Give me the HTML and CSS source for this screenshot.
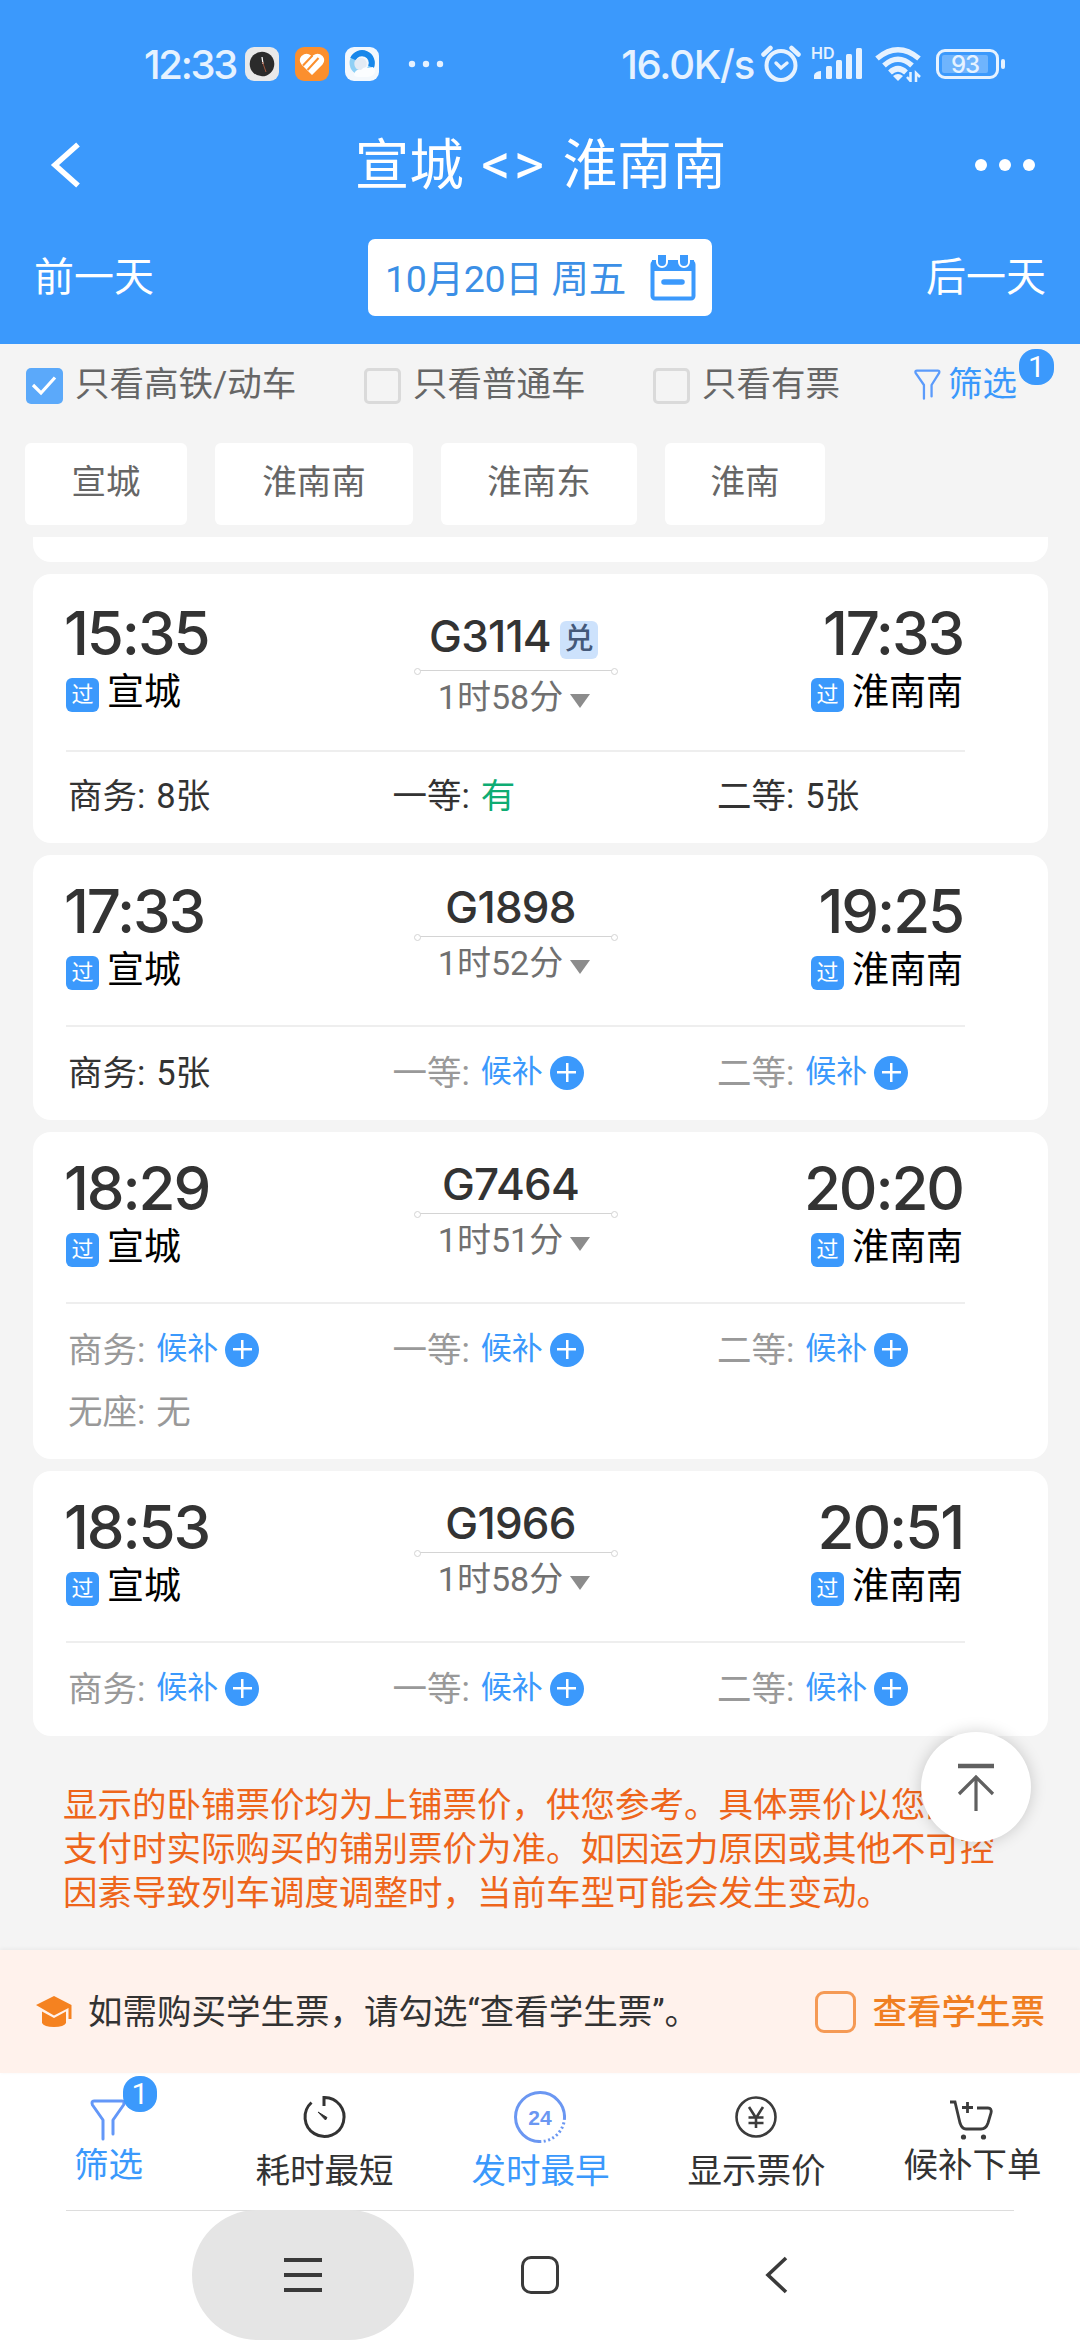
FILE: index.html
```html
<!DOCTYPE html>
<html lang="zh-CN">
<head>
    <meta charset="UTF-8">
    <meta name="viewport" content="width=device-width, initial-scale=1.0">
    <title>宣城 - 淮南南</title>
    <link rel="stylesheet" href="styles.css">
</head>
<body>
    <header class="header">
        <div class="status-bar">
            <span class="clock">12:33</span>
            <div class="app-icons">
                <svg width="34" height="34" viewBox="0 0 34 34">
                    <rect width="34" height="34" rx="9" fill="#e9e9e9"/>
                    <circle cx="17" cy="17" r="12.3" fill="#2b2b2b"/>
                    <path d="M18 17l-1-7" stroke="#fff" stroke-width="1.3"/>
                    <path d="M17.500 15l3.500 10" stroke="#a0553c" stroke-width="1"/>
                </svg>
                <svg width="34" height="34" viewBox="0 0 34 34">
                    <rect width="34" height="34" rx="9" fill="#fb8f2e"/>
                    <path d="M17 28L6.500 17.500Q3 13 6.500 9q5-4 9.500-.5L17 9.500l1-1q5-3.500 9.500.5 3.500 4 0 8.500z" fill="#fff"/>
                    <path d="M8 18.500L17.500 8.500M12.500 23L23.500 11" stroke="#fb8f2e" stroke-width="2"/>
                </svg>
                <svg width="34" height="34" viewBox="0 0 34 34">
                    <rect width="34" height="34" rx="9" fill="#f3f8fd"/>
                    <circle cx="17" cy="16" r="9.700" stroke="#8fd0f5" stroke-width="5.500" fill="none"/>
                    <path d="M8 12A9.700 9.700 0 0 1 26 20" stroke="#1787ea" stroke-width="6" fill="none"/>
                    <circle cx="15.500" cy="17" r="6.200" fill="#e3ebf4"/>
                    <path d="M9 28q1-6 7-5 3-4 7-2l5-1q4 4 0 8-2 2-6 2h-9q-3 0-4-2z" fill="#fbfdff"/>
                </svg>
            </div>
            <svg class="status-dots" width="36" height="8" viewBox="0 0 36 8" fill="#e6f2ff">
                <circle cx="4" cy="4" r="3.200"/><circle cx="18" cy="4" r="3.200"/><circle cx="32" cy="4" r="3.200"/>
            </svg>
            <span class="net-speed">16.0K/s</span>
            <svg class="alarm" width="40" height="38" viewBox="0 0 40 38" fill="none" stroke="#e6f2ff">
                <circle cx="20" cy="20.500" r="14.500" stroke-width="4"/>
                <path d="M2.500 9.500l7-6.500M37.500 9.500l-7-6.500" stroke-width="4.500" stroke-linecap="round"/>
                <path d="M15 18l5 5 6-5" stroke-width="3.400" stroke-linecap="round"/>
            </svg>
            <div class="signal">
                <span class="hd">HD</span>
                <svg width="50" height="32" viewBox="0 0 50 32" fill="#e6f2ff">
                    <path d="M0 31v-4q2-4 7-4v8z"/>
                    <rect x="12" y="18" width="6" height="13" rx="1.500"/>
                    <rect x="22" y="12" width="6" height="19" rx="1.500"/>
                    <rect x="32" y="6" width="6" height="25" rx="1.500"/>
                    <rect x="42" y="0" width="6" height="31" rx="1.500"/>
                </svg>
            </div>
            <svg class="wifi" width="48" height="36" viewBox="0 0 48 36" fill="none" stroke="#e6f2ff" stroke-width="5.500">
                <path d="M2 12.500Q23-5 44 12.500"/>
                <path d="M9 19.500Q23 7 37 19.500"/>
                <path d="M15 26.500Q23 19 31 26.500"/>
                <path d="M18 30q5-4 10 0l-5 5z" fill="#e6f2ff" stroke="none"/>
                <path d="M35.500 26v9l-3.500-4M41 36v-9l4 4" stroke-width="2.500"/>
            </svg>
            <div class="battery"><span>93</span></div>
        </div>

        <div class="title-bar">
            <svg class="back" width="32" height="46" viewBox="0 0 32 46" fill="none" stroke="#fff" stroke-width="5.500">
                <path d="M28 2.500L5 23l23 20.500"/>
            </svg>
            <h1>宣城 <span class="swap">&lt;&gt;</span> 淮南南</h1>
            <svg class="more" width="62" height="14" viewBox="0 0 62 14" fill="#fff">
                <circle cx="7" cy="7" r="6"/><circle cx="31" cy="7" r="6"/><circle cx="55" cy="7" r="6"/>
            </svg>
        </div>

        <div class="date-bar">
            <span>前一天</span>
            <div class="date-box">
                <span>10月20日 周五</span>
                <svg width="46" height="46" viewBox="0 0 46 46" fill="none" stroke="#3b99fc">
                    <rect x="2.500" y="7" width="41" height="36.500" rx="2.500" stroke-width="4"/>
                    <path d="M2 5h42v11H2z" fill="#3b99fc" stroke="none"/>
                    <path d="M7 0v7a5 5 0 0 0 10 0V0M29 0v7a5 5 0 0 0 10 0V0" fill="#3b99fc" stroke="#fff" stroke-width="2"/>
                    <path d="M14 27h18" stroke-width="5.500" stroke-linecap="round"/>
                </svg>
            </div>
            <span>后一天</span>
        </div>
    </header>

    <div class="filters">
        <label class="filter f-gd"><i class="box checked"><svg width="36" height="34" viewBox="0 0 36 34" fill="none" stroke="#fff" stroke-width="3.200"><path d="M7 17l8 8L29 9.500"/></svg></i>只看高铁/动车</label>
        <label class="filter f-pt"><i class="box"></i>只看普通车</label>
        <label class="filter f-yp"><i class="box"></i>只看有票</label>
        <div class="filter-more">
            <svg width="28" height="32" viewBox="0 0 36 42" fill="none" stroke="#5b9bfb" stroke-width="3" stroke-linecap="round" stroke-linejoin="round">
                <path d="M14 39V21L3 5Q2 2 5 2h27q3 0 2 3L24 21v15"/>
            </svg>
            筛选
            <span class="badge">1</span>
        </div>
    </div>

    <div class="stations">
        <span class="chip w1">宣城</span>
        <span class="chip w2">淮南南</span>
        <span class="chip w3">淮南东</span>
        <span class="chip w4">淮南</span>
    </div>

    <main class="list">
        <div class="card stub"></div>

        <div class="card has-tag">
            <div class="trip">
                <div class="from">
                    <div class="time">15:35</div>
                    <div class="station"><i class="pass">过</i>宣城</div>
                </div>
                <div class="middle">
                    <div class="number">G3114<i class="tag">兑</i></div>
                    <div class="line"></div>
                    <div class="duration">1时58分<i class="caret"></i></div>
                </div>
                <div class="to">
                    <div class="time">17:33</div>
                    <div class="station"><i class="pass">过</i>淮南南</div>
                </div>
            </div>
            <div class="seats">
                <div class="seat">商务:<span>8张</span></div>
                <div class="seat">一等:<span class="have">有</span></div>
                <div class="seat">二等:<span>5张</span></div>
            </div>
        </div>

        <div class="card">
            <div class="trip">
                <div class="from">
                    <div class="time">17:33</div>
                    <div class="station"><i class="pass">过</i>宣城</div>
                </div>
                <div class="middle">
                    <div class="number">G1898</div>
                    <div class="line"></div>
                    <div class="duration">1时52分<i class="caret"></i></div>
                </div>
                <div class="to">
                    <div class="time">19:25</div>
                    <div class="station"><i class="pass">过</i>淮南南</div>
                </div>
            </div>
            <div class="seats">
                <div class="seat">商务:<span>5张</span></div>
                <div class="seat none">一等:<span class="wait">候补</span><i class="plus"></i></div>
                <div class="seat none">二等:<span class="wait">候补</span><i class="plus"></i></div>
            </div>
        </div>

        <div class="card">
            <div class="trip">
                <div class="from">
                    <div class="time">18:29</div>
                    <div class="station"><i class="pass">过</i>宣城</div>
                </div>
                <div class="middle">
                    <div class="number">G7464</div>
                    <div class="line"></div>
                    <div class="duration">1时51分<i class="caret"></i></div>
                </div>
                <div class="to">
                    <div class="time">20:20</div>
                    <div class="station"><i class="pass">过</i>淮南南</div>
                </div>
            </div>
            <div class="seats">
                <div class="seat none">商务:<span class="wait">候补</span><i class="plus"></i></div>
                <div class="seat none">一等:<span class="wait">候补</span><i class="plus"></i></div>
                <div class="seat none">二等:<span class="wait">候补</span><i class="plus"></i></div>
                <div class="seat none">无座:<span>无</span></div>
            </div>
        </div>

        <div class="card">
            <div class="trip">
                <div class="from">
                    <div class="time">18:53</div>
                    <div class="station"><i class="pass">过</i>宣城</div>
                </div>
                <div class="middle">
                    <div class="number">G1966</div>
                    <div class="line"></div>
                    <div class="duration">1时58分<i class="caret"></i></div>
                </div>
                <div class="to">
                    <div class="time">20:51</div>
                    <div class="station"><i class="pass">过</i>淮南南</div>
                </div>
            </div>
            <div class="seats">
                <div class="seat none">商务:<span class="wait">候补</span><i class="plus"></i></div>
                <div class="seat none">一等:<span class="wait">候补</span><i class="plus"></i></div>
                <div class="seat none">二等:<span class="wait">候补</span><i class="plus"></i></div>
            </div>
        </div>

        <p class="notice">显示的卧铺票价均为上铺票价，供您参考。具体票价以您的<br>支付时实际购买的铺别票价为准。如因运力原因或其他不可控<br>因素导致列车调度调整时，当前车型可能会发生变动。</p>

        <!-- Back to top -->
        <div class="to-top">
            <svg width="40" height="48" viewBox="0 0 40 48" fill="none" stroke="#606060">
                <path d="M2 3h36" stroke-width="4.500"/>
                <path d="M20 48V15M3 31l17-17 17 17" stroke-width="3.200"/>
            </svg>
        </div>
    </main>

    <div class="student">
        <svg width="38" height="32" viewBox="0 0 38 32" fill="#f58220">
            <path d="M19 0l17.500 9v14h-3V12L19 19.500 1 9z"/>
            <path d="M7 15.500l12 6.500 12-6.500V27q-2 4-12 4T7 27z"/>
        </svg>
        <span class="student-text">如需购买学生票，请勾选“查看学生票”。</span>
        <label class="student-check"><i></i>查看学生票</label>
    </div>

    <nav class="tabs">
        <div class="tab active high">
            <svg width="38" height="42" viewBox="0 0 36 42" fill="none" stroke="#6397f8" stroke-width="3" stroke-linecap="round" stroke-linejoin="round">
                <path d="M13 40V21L2.500 6Q1 2 4 2h28q3 0 1.500 4L23 21v14"/>
            </svg>
            <span>筛选</span>
            <b class="badge">1</b>
        </div>
        <div class="tab">
            <svg width="52" height="52" viewBox="0 0 52 52" fill="none" stroke="#333" stroke-width="3">
                <path d="M26 15V6.500A19.500 19.500 0 1 1 13.500 11.500"/>
                <path d="M20 21l9 5.500-1.500 2.500z" fill="#333" stroke-width="1"/>
            </svg>
            <span>耗时最短</span>
        </div>
        <div class="tab active">
            <svg width="52" height="52" viewBox="0 0 52 52" fill="none" stroke="#6b97f2" stroke-width="3">
                <path d="M27 50.500A24.500 24.500 0 1 1 50.500 27"/>
                <path d="M50.500 27A24.500 24.500 0 0 1 27 50.500" stroke-dasharray="2 2.500"/>
                <text x="26" y="33.500" text-anchor="middle" class="icon-text">24</text>
            </svg>
            <span>发时最早</span>
        </div>
        <div class="tab">
            <svg width="52" height="52" viewBox="0 0 52 52" fill="none" stroke="#3c3c3c" stroke-width="2.600">
                <circle cx="26" cy="26" r="19.500"/>
                <path d="M19 16l7 11 7-11M26 27v10M18.500 26.500h15M18.500 32h15"/>
            </svg>
            <span>显示票价</span>
        </div>
        <div class="tab high">
            <svg width="46" height="42" viewBox="0 0 46 42" fill="none" stroke="#3c3c3c" stroke-width="2.800">
                <path d="M1 3h5l5 21q2 6 6 6h15q5 0 7-6l3-10q1-5-3-5H28"/>
                <path d="M13 8.500h11M18.500 3v11"/>
                <circle cx="14.500" cy="38" r="2.600" fill="#3c3c3c" stroke="none"/>
                <circle cx="34.500" cy="38" r="2.600" fill="#3c3c3c" stroke="none"/>
            </svg>
            <span>候补下单</span>
        </div>
    </nav>

    <footer class="sys-nav">
        <div class="key menu">
            <svg width="38" height="34" viewBox="0 0 38 34" stroke="#3a3a3a" stroke-width="4"><path d="M0 2h38M0 17h38M0 32h38"/></svg>
        </div>
        <div class="key"><i class="home"></i></div>
        <div class="key">
            <svg width="24" height="38" viewBox="0 0 24 38" fill="none" stroke="#3a3a3a" stroke-width="3.600"><path d="M21 2L3 19l18 17"/></svg>
        </div>
    </footer>
</body>
</html>
```

FILE: styles.css
```css
* {
    box-sizing: border-box;
}
body {
    margin: 0;
    width: 1080px;
    height: 2340px;
    display: flex;
    flex-direction: column;
    overflow: hidden;
    background: #f4f4f4;
    color: #333;
    font-family: Roboto, 'Noto Sans CJK SC', sans-serif;
    font-size: 34.5px;
    white-space: nowrap;
}
i, b {
    font-style: normal;
    font-weight: 400;
}
svg {
    display: block;
    flex: none;
}

/* Header */
.header {
    height: 344px;
    background: #3b99fc;
    color: #fff;
    flex: none;
}
.status-bar {
    height: 128px;
    display: flex;
    align-items: center;
    padding: 0 75px 0 144px;
    font-family: Inter, sans-serif;
    color: #e6f2ff;
}
.clock {
    width: 101px;
    font-size: 40px;
    font-weight: 500;
    letter-spacing: -2.3px;
}
.app-icons {
    display: flex;
    gap: 16px;
}
.status-dots {
    margin-left: 29px;
}
.net-speed {
    margin-left: auto;
    font-size: 40px;
    font-weight: 500;
    letter-spacing: -1.2px;
}
.alarm {
    margin-left: 7px;
}
.signal {
    position: relative;
    margin-left: 13px;
}
.hd {
    position: absolute;
    left: -3px;
    top: -3px;
    font-size: 16px;
    line-height: 16px;
    font-weight: 600;
}
.wifi {
    margin-left: 11px;
}
.battery {
    position: relative;
    width: 63px;
    height: 30px;
    margin-left: 13px;
    margin-right: 6px;
    border: 3px solid #e6f2ff;
    border-radius: 9px;
    padding: 3px;
}
.battery span {
    display: block;
    width: 46px;
    height: 18px;
    background: #6fb4fd;
    border-radius: 2px;
    text-align: center;
    font-size: 24px;
    line-height: 19px;
    font-weight: 500;
    letter-spacing: -1px;
}
.battery::after {
    content: "";
    position: absolute;
    right: -9px;
    top: 7px;
    width: 4px;
    height: 10px;
    border-radius: 2px;
    background: #e6f2ff;
}
.title-bar {
    height: 74px;
    display: flex;
    align-items: center;
    justify-content: space-between;
    padding: 0 44px 0 50px;
}
.title-bar .back {
    margin-right: 27px;
}
.title-bar h1 {
    margin: 0 2px 0 0;
    font-size: 54.5px;
    line-height: 74px;
    font-weight: 400;
}
.swap {
    margin: 0 2px 0 4px;
    font-size: 58px;
    line-height: 60px;
    letter-spacing: 3px;
}
.date-bar {
    display: flex;
    align-items: center;
    justify-content: space-between;
    padding: 37px 34px 0;
    font-size: 40px;
}
.date-bar > span {
    margin-top: -7px;
}
.date-box {
    width: 344px;
    height: 77px;
    display: flex;
    align-items: center;
    justify-content: space-between;
    padding: 0 16px 0 17px;
    background: #fff;
    border-radius: 7px;
    color: #3b8fe6;
    font-size: 37.5px;
    line-height: 74px;
}
.date-box span {
    margin-top: 2px;
    letter-spacing: -0.3px;
}

/* Filters */
.filters {
    height: 99px;
    display: flex;
    align-items: flex-start;
    padding: 15px 25px 0 26px;
    color: #666;
    line-height: 50px;
    flex: none;
}
.filter {
    display: flex;
    gap: 12px;
}
.f-gd {
    width: 338px;
}
.f-pt {
    width: 289px;
}
.f-yp {
    width: 260px;
}
.box {
    width: 37px;
    height: 36px;
    margin-top: 9px;
    border: 3px solid #dadada;
    border-radius: 5px;
}
.box.checked {
    border: none;
    background: #5ba9fa;
}
.filter-more {
    position: relative;
    display: flex;
    gap: 7px;
    color: #3b99fc;
}
.filter-more svg {
    margin-top: 10px;
}
.badge {
    position: absolute;
    left: 106px;
    top: -10px;
    width: 35px;
    height: 36px;
    border-radius: 16px;
    background: #3b99fc;
    color: #fff;
    font-size: 30px;
    line-height: 36px;
    text-align: center;
}
.stations {
    display: flex;
    gap: 28px;
    padding: 0 25px;
    height: 94px;
    flex: none;
}
.chip {
    height: 82px;
    line-height: 78px;
    text-align: center;
    background: #fff;
    border-radius: 6px;
    color: #666;
}
.w1 {
    width: 162px;
}
.w2 {
    width: 198px;
}
.w3 {
    width: 196px;
}
.w4 {
    width: 160px;
}

/* Train list */
.list {
    position: relative;
    height: 1413px;
    padding: 0 32px 0 33px;
    display: flex;
    flex-direction: column;
    gap: 12px;
    flex: none;
}
.card {
    background: #fff;
    border-radius: 18px;
    padding: 26px 83px 19px 33px;
}
.stub {
    height: 25px;
    padding: 0;
    border-radius: 0 0 18px 18px;
}
.trip {
    display: grid;
    grid-template-columns: 1fr 200px 1fr;
    height: 146px;
    border-bottom: 2px solid #eee;
}
.time {
    font-family: Inter, sans-serif;
    font-size: 60px;
    line-height: 60px;
    font-weight: 500;
    letter-spacing: -2.1px;
}
.from .time {
    margin-left: -2px;
}
.to {
    justify-self: end;
    text-align: right;
}
.to .time {
    margin-right: 2px;
}
.to .station {
    justify-content: flex-end;
}
.station {
    display: flex;
    align-items: flex-end;
    gap: 8px;
    height: 43px;
    margin-top: 6px;
    padding-right: 2px;
    line-height: 39px;
    font-size: 37px;
    color: #000;
}
.pass {
    width: 33px;
    height: 34px;
    border-radius: 6px;
    background: #3b99fc;
    color: #fff;
    font-size: 22px;
    line-height: 33px;
    text-align: center;
}
.number {
    display: flex;
    justify-content: center;
    align-items: center;
    gap: 9px;
    height: 52px;
    margin: 0 0 3px -10px;
    font-family: Inter, 'Noto Sans CJK SC', sans-serif;
    font-size: 44px;
    font-weight: 500;
    letter-spacing: -0.8px;
}
.tag {
    width: 38px;
    height: 38px;
    margin-top: 7px;
    border-radius: 6px;
    background: #cde2fc;
    color: #44597a;
    font-size: 29px;
    line-height: 36px;
    letter-spacing: 0;
    text-align: center;
    font-weight: 500;
}
.line {
    position: relative;
    height: 1px;
    background: #d4d4d4;
}
.line::before, .line::after {
    content: "";
    position: absolute;
    top: -2px;
    width: 5px;
    height: 5px;
    border: 1px solid #d4d4d4;
    border-radius: 50%;
    background: #fff;
}
.line::before {
    left: -2px;
}
.line::after {
    right: -2px;
}
.duration {
    display: flex;
    justify-content: center;
    align-items: center;
    gap: 7px;
    height: 46px;
    margin-left: -3px;
    color: #707070;
    font-size: 34px;
}
.caret {
    margin-top: 13px;
    border: 10px solid transparent;
    border-top: 14px solid #8c8c8c;
    border-bottom: 0;
}
.seats {
    display: grid;
    grid-template-columns: repeat(3, 324.5px);
    padding: 12px 0 0 2px;
}
.seat {
    display: flex;
    align-items: center;
    height: 62px;
}
.seat span {
    margin-left: 11px;
}
.none {
    color: #999;
}
.seat .have {
    color: #0eac73;
}
.seat .wait {
    color: #3b99fc;
    font-size: 31px;
    margin-top: -3px;
}
.plus {
    width: 34px;
    height: 34px;
    margin: 5px 0 0 7px;
    border-radius: 50%;
    background:
        linear-gradient(#fff, #fff) center / 19px 2.5px no-repeat,
        linear-gradient(#fff, #fff) center / 2.5px 19px no-repeat,
        #3b99fc;
}

/* Card with the exchange tag is slightly taller */
.has-tag {
    padding-top: 29px;
}
.has-tag .trip {
    height: 149px;
}
.has-tag .number {
    margin: 7px 0 8px -4px;
}
.has-tag .seats {
    padding-top: 10px;
}
.notice {
    margin: 35px 0 0 30px;
    line-height: 44px;
    color: #ee651b;
}
.to-top {
    position: absolute;
    left: 921px;
    top: 1195px;
    width: 110px;
    height: 110px;
    border-radius: 50%;
    background: #fff;
    box-shadow: 0 0 16px rgba(0, 0, 0, 0.18);
    display: flex;
    align-items: center;
    justify-content: center;
}

/* Student ticket bar */
.student {
    height: 123px;
    display: flex;
    align-items: center;
    padding: 0 35px;
    background: #fff2ec;
    box-shadow: 0 -1px 4px rgba(0, 0, 0, 0.05);
    position: relative;
    flex: none;
}
.student-text {
    margin-left: 15px;
    margin-top: -6px;
}
.student-check {
    display: flex;
    align-items: center;
    gap: 17px;
    margin-left: auto;
    color: #f07f22;
    font-weight: 500;
    margin-top: -6px;
}
.student-check i {
    width: 41px;
    height: 42px;
    margin-top: 6px;
    border: 3px solid #f59a55;
    border-radius: 9px;
}

/* Bottom tabs */
.tabs {
    height: 137px;
    display: grid;
    grid-template-columns: repeat(5, 216px);
    background: #fff;
    flex: none;
}
.tab {
    position: relative;
    display: flex;
    flex-direction: column;
    align-items: center;
    padding-top: 18px;
    line-height: 50px;
}
.tab span {
    margin: 3px 0 0 1px;
}
.tab.high {
    padding-top: 26px;
}
.tab.high span {
    margin-top: -1px;
}
.tab.active {
    color: #3b99fc;
}
.tab .badge {
    left: 123px;
    top: 3px;
    width: 34px;
}
.icon-text {
    font: bold 21px 'Liberation Sans', sans-serif;
    fill: #6b97f2;
    stroke: none;
}

/* System navigation */
.sys-nav {
    position: relative;
    height: 130px;
    display: flex;
    justify-content: center;
    gap: 15px;
    background: #fff;
}
.sys-nav::before {
    content: "";
    position: absolute;
    left: 66px;
    right: 66px;
    top: 0;
    height: 1px;
    background: #ddd;
}
.key {
    position: relative;
    width: 222px;
    display: flex;
    align-items: center;
    justify-content: center;
}
.menu {
    background: #e5e5e5;
    border-radius: 65px;
}
.home {
    width: 38px;
    height: 38px;
    border: 3.5px solid #3a3a3a;
    border-radius: 10px;
}
```
